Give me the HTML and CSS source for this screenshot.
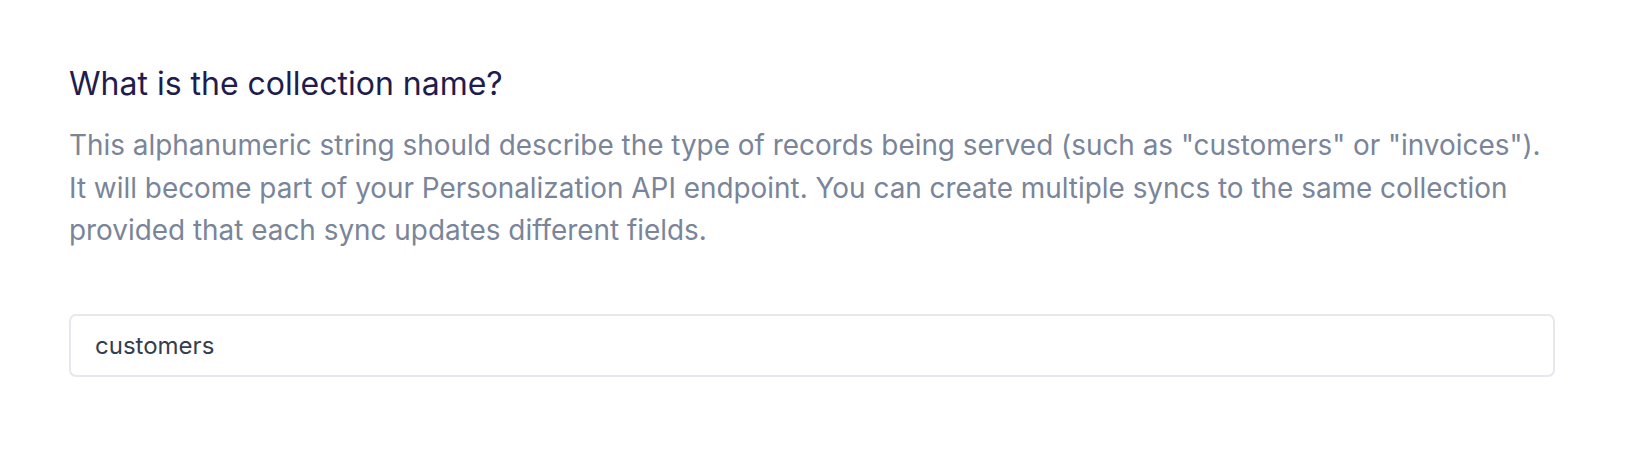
FILE: index.html
```html
<!DOCTYPE html>
<html lang="en">
<head>
<meta charset="utf-8">
<title>Collection name</title>
<link rel="stylesheet" href="styles.css">
</head>
<body>
<main class="step">
  <h2 class="step-title">What is the collection name?</h2>
  <p class="step-desc">This alphanumeric string should describe the type of records being served (such as "customers" or "invoices").<br>It will become part of your Personalization API endpoint. You can create multiple syncs to the same collection<br>provided that each sync updates different fields.</p>
  <input class="text-input" type="text" value="customers">
</main>
</body>
</html>
```
FILE: styles.css
```css
html, body {
  margin: 0;
  padding: 0;
  background: #ffffff;
}
body {
  font-family: Inter, "Noto Sans", sans-serif;
}
.step {
  padding: 64px 79px 0 69px;
  display: flex;
  flex-direction: column;
}
.step-title {
  margin: 0;
  font-size: 32px;
  font-weight: 400;
  line-height: 40px;
  color: #211c4d;
}
.step-desc {
  margin: 20px 0 0;
  font-size: 27.9px;
  line-height: 42.5px;
  color: #7a8599;
  white-space: nowrap;
}
.text-input {
  margin-top: 62px;
  height: 63px;
  box-sizing: border-box;
  border: 2px solid #e6e8f0;
  border-radius: 7px;
  padding: 0 24px;
  font-family: Inter, "Noto Sans", sans-serif;
  font-size: 24px;
  color: #353d4e;
  background: #fff;
  outline: none;
}
```
